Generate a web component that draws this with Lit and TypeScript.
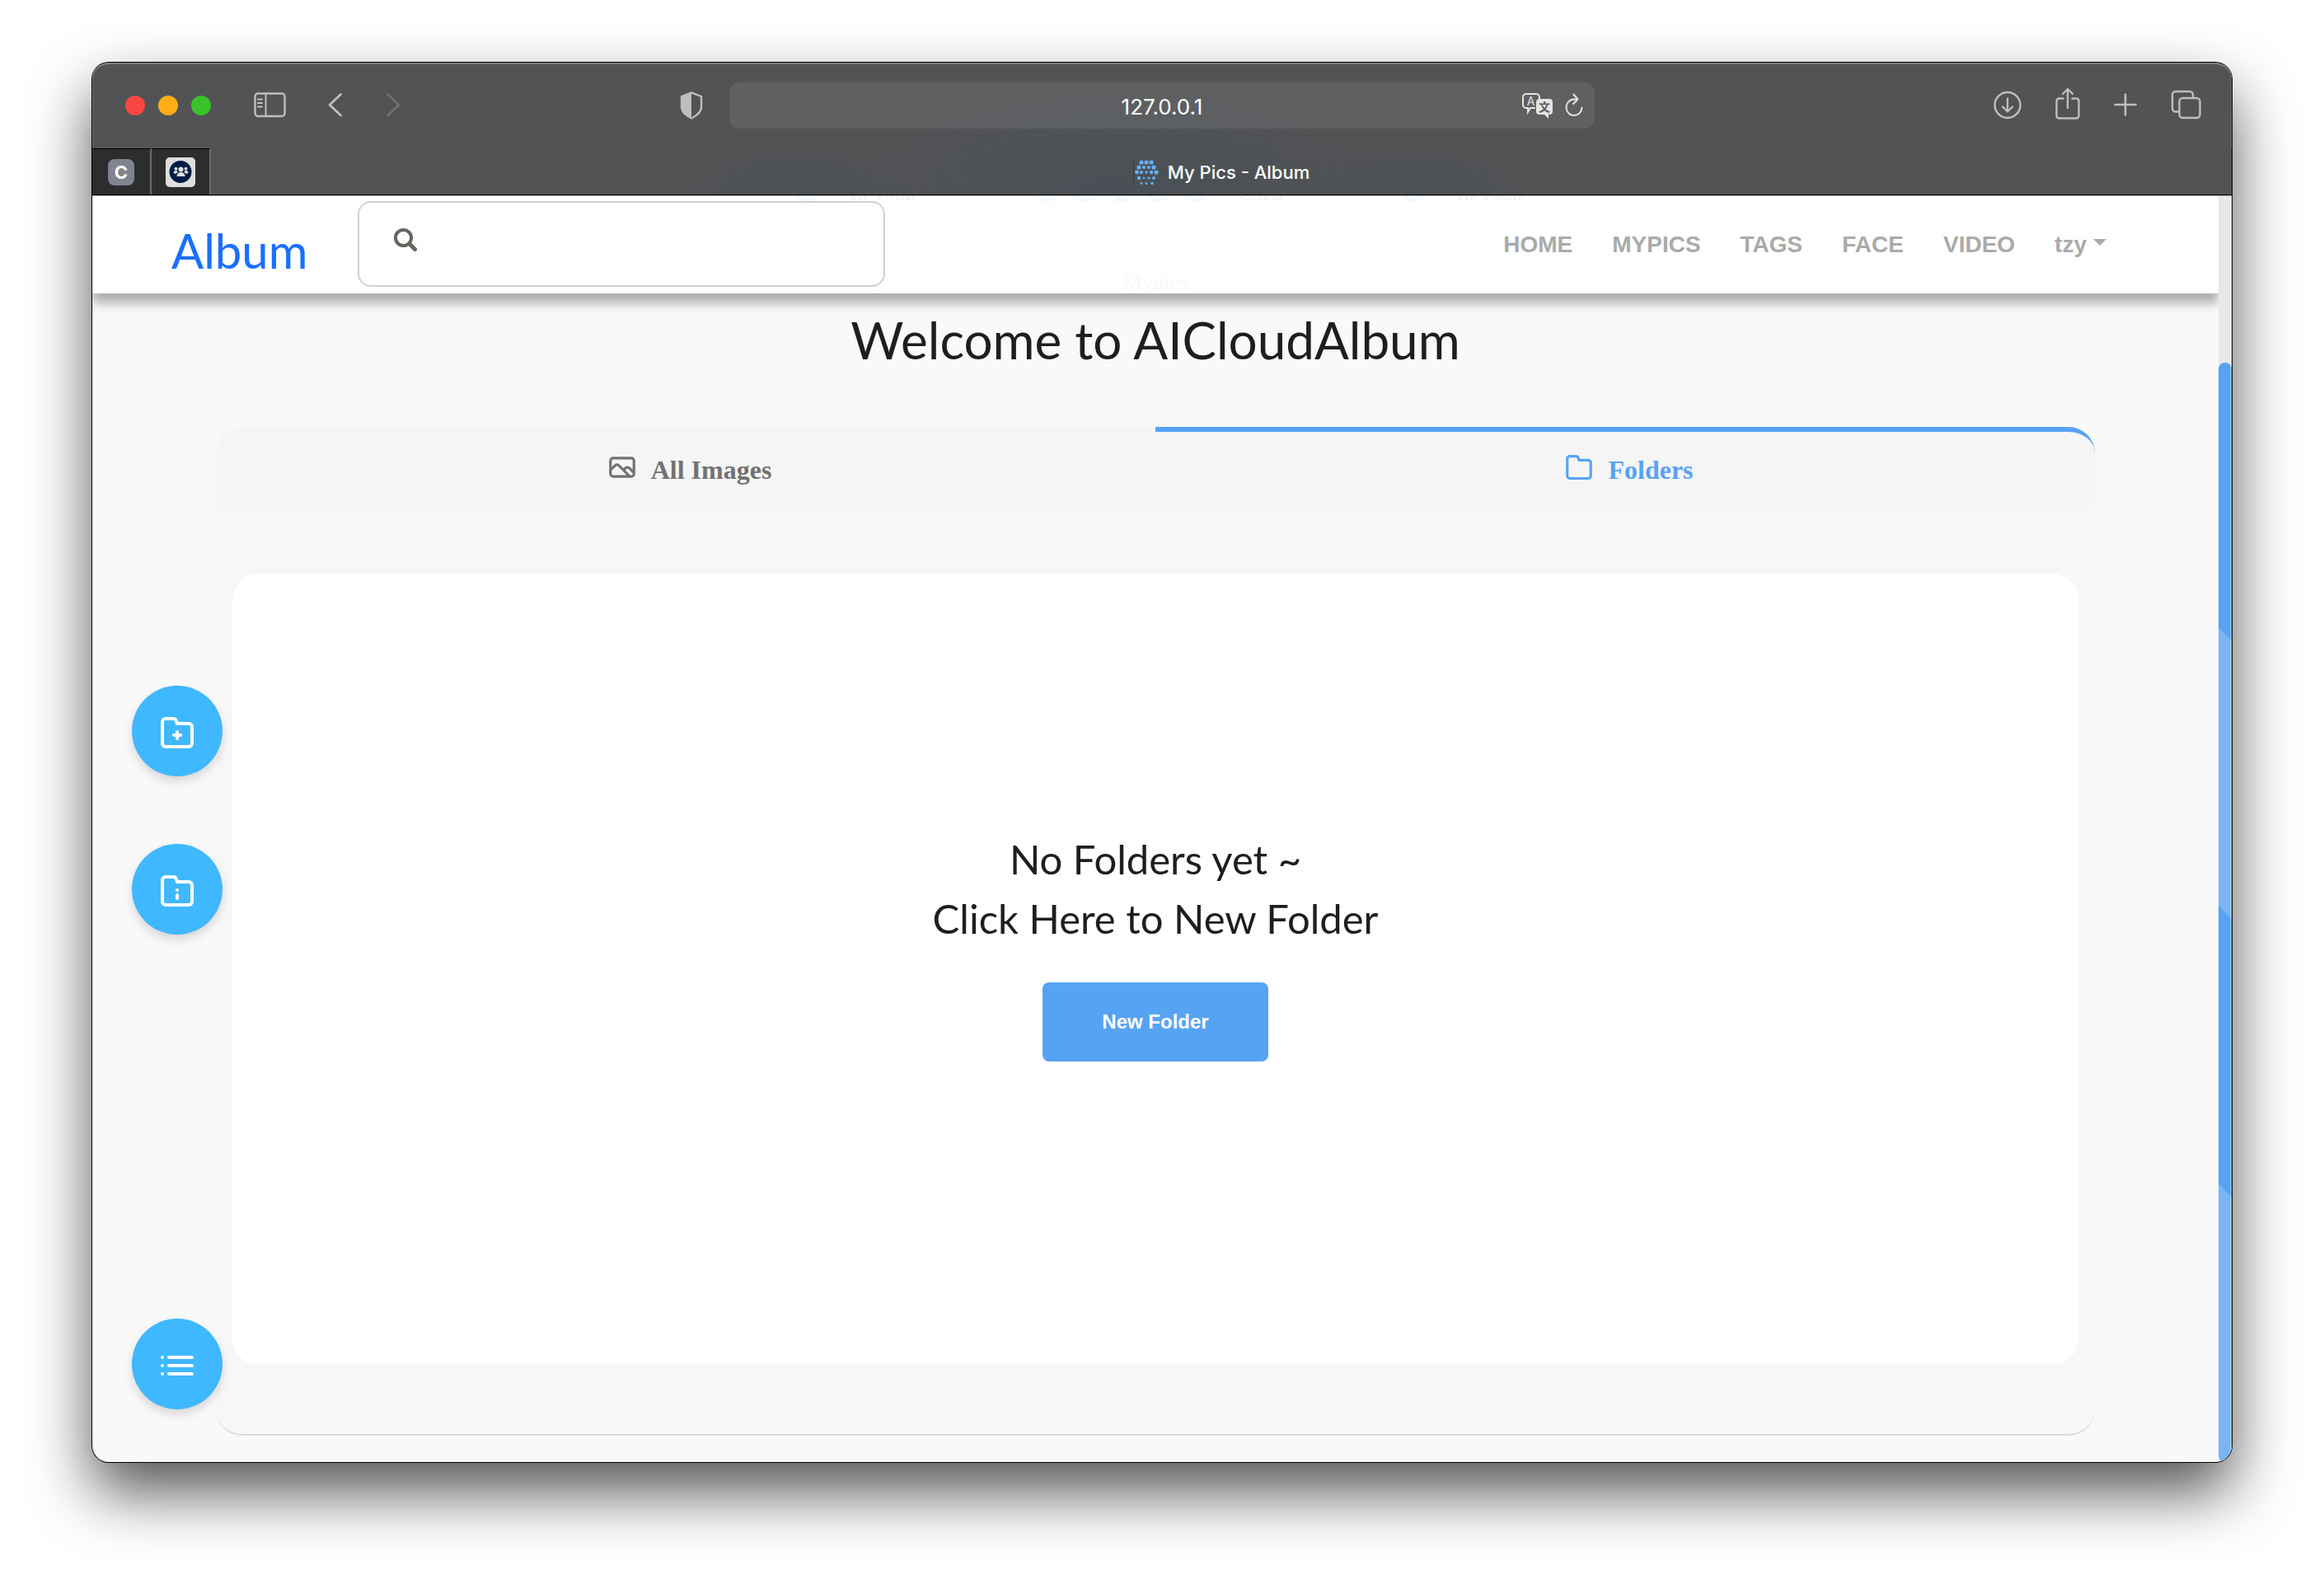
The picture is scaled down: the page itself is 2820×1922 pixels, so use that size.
import { LitElement, html, svg, css } from "lit";
import { customElement, property, state } from "lit/decorators.js";

const folderOutline = svg`<path d="M5 3.5h4.56a2 2 0 0 1 1.9 1.37L12 6.500h7a2 2 0 0 1 2 2v10a2 2 0 0 1-2 2H5a2 2 0 0 1-2-2v-13a2 2 0 0 1 2-2z"/>`;

const icons = {
  folder: html`<svg viewBox="0 0 24 24" aria-hidden="true" fill="none" stroke="currentColor" stroke-width="2">${folderOutline}</svg>`,
  folderPlus: html`<svg viewBox="0 0 24 24" aria-hidden="true" fill="none" stroke="currentColor" stroke-width="2" stroke-linecap="round">${folderOutline}<path d="M12 11.500v4M10 13.500h4"/></svg>`,
  folderInfo: html`<svg viewBox="0 0 24 24" aria-hidden="true" fill="none" stroke="currentColor" stroke-width="2" stroke-linecap="round">${folderOutline}<path d="M12 11.500h.01M12 14.500v2"/></svg>`,
  list: html`<svg viewBox="0 0 24 24" aria-hidden="true" fill="none" stroke="currentColor" stroke-width="2" stroke-linecap="round"><path d="M3 7h.01M3 12h.01M3 17h.01M7 7h14M7 12h14M7 17h14"/></svg>`,
  image: html`<svg viewBox="0 0 24 24" aria-hidden="true" fill="currentColor"><path d="M19,4H5A3,3,0,0,0,2,7V17a3,3,0,0,0,3,3H19a3,3,0,0,0,3-3V7A3,3,0,0,0,19,4ZM5,18a1,1,0,0,1-1-1V14.58l3.3-3.29a1,1,0,0,1,1.4,0L15.41,18Zm15-1a1,1,0,0,1-1,1h-.77l-3.81-3.83.88-.88a1,1,0,0,1,1.4,0L20,16.58Zm0-3.24-1.88-1.87a3.06,3.06,0,0,0-4.24,0l-.88.88L10.12,9.89a3.06,3.06,0,0,0-4.24,0L4,11.76V7A1,1,0,0,1,5,6H19a1,1,0,0,1,1,1Z"/></svg>`,
};

@customElement("browser-chrome")
class BrowserChrome extends LitElement {
  @property() address = "";
  @property() pageTitle = "";

  static styles = css`
    :host {
      display: block;
      color: #fff;
      font-family: Inter, "Liberation Sans", sans-serif;
      background:
        radial-gradient(ellipse 320px 130px at 48% 100%, #495056, transparent),
        radial-gradient(ellipse 160px 70px at 33% 100%, #4c5154, transparent),
        radial-gradient(ellipse 160px 70px at 62% 100%, #4c5154, transparent),
        #525355;
      border-bottom: 1px solid #000;
    }
    button {
      display: flex;
      padding: 0;
      border: 0;
      background: none;
      color: #bdbebf;
      font: inherit;
    }
    svg {
      display: block;
      flex: none;
    }
    .toolbar {
      display: grid;
      grid-template-columns: 1fr minmax(300px, 1050px) 1fr;
      align-items: center;
      height: 104px;
      border-radius: 20px 20px 0 0;
      box-shadow: inset 0 2px #7d7f7e, inset 1px 0 #6c6e6d, inset -1px 0 #6c6e6d;
    }
    .left {
      display: flex;
      align-items: center;
      padding-left: 40px;
    }
    .lights {
      display: flex;
      gap: 16px;
      margin-right: 52px;
    }
    .light {
      width: 24px;
      height: 24px;
      border-radius: 50%;
      background: #fa4643;
    }
    .light.min {
      background: #fdad16;
    }
    .light.max {
      background: #39c22a;
    }
    .back {
      margin: 0 52px 0 50px;
    }
    .forward {
      color: #6f7072;
    }
    .shield {
      margin: 0 32px 0 auto;
    }
    .address {
      display: grid;
      grid-template-columns: 1fr auto 1fr;
      align-items: center;
      height: 56px;
      border-radius: 12px;
      background: rgba(255, 255, 255, 0.08);
      font-size: 26px;
    }
    .host {
      grid-column: 2;
      padding-top: 2px;
    }
    .tools {
      display: flex;
      justify-content: flex-end;
      align-items: center;
      gap: 14px;
      padding-right: 14px;
    }
    .tools button {
      color: #e4e4e4;
    }
    .right {
      display: flex;
      justify-content: flex-end;
      gap: 41px;
      padding-right: 36px;
    }
    .tabs {
      display: flex;
      height: 56px;
    }
    .pinned {
      box-sizing: border-box;
      width: 72px;
      align-items: center;
      justify-content: center;
      background: #2c2d2d;
      border-top: 1px solid #000;
      border-right: 2px solid #6a6b6b;
    }
    .letter {
      width: 32px;
      height: 32px;
      border-radius: 8px;
      background: #828391;
      color: #fff;
      font-size: 22px;
      font-weight: 700;
      line-height: 32px;
      text-align: center;
    }
    .current {
      flex: 1;
      display: flex;
      align-items: center;
      justify-content: center;
      gap: 11px;
      padding-top: 2px;
      font-size: 22px;
      font-weight: 500;
    }
    .current svg {
      border-left: 1px solid #3a3c3e;
    }
  `;

  private favicon() {
    const rows = [
      { y: 4, xs: [8, 14, 20], r: [2.6, 2.6, 2.6] },
      { y: 10, xs: [5, 11, 17, 23], r: [2.6, 2, 2, 2.6] },
      { y: 16, xs: [2.500, 8, 14, 20, 26], r: [2.4, 2, 1.7, 2.2, 2.6] },
      { y: 23, xs: [5, 11, 17, 23], r: [2.3, 1.3, 1.5, 2] },
      { y: 29.5, xs: [8, 14, 21], r: [1.4, 1.4, 1.8] },
    ];
    return html`<svg width="30" height="32" viewBox="0 0 30 32" fill="#62b2fb" aria-hidden="true">
      ${rows.map((row) => row.xs.map((x, i) => svg`<circle cx=${x + 1} cy=${row.y} r=${row.r[i]}></circle>`))}
    </svg>`;
  }

  render() {
    return html`
      <div class="toolbar">
        <div class="left">
          <div class="lights">
            <span class="light"></span><span class="light min"></span><span class="light max"></span>
          </div>
          <button aria-label="Sidebar">
            <svg width="40" height="32" viewBox="0 0 40 32" fill="none" stroke="currentColor" stroke-width="2.4">
              <rect x="1.500" y="1.500" width="36" height="27.500" rx="3.500" /><path d="M14.500 2v27M5 8.500h5M5 13h5M5 17.500h5" stroke-linecap="round" stroke-width="2" />
            </svg>
          </button>
          <button class="back" aria-label="Back">
            <svg width="18" height="32" viewBox="0 0 18 32" fill="none" stroke="currentColor" stroke-width="2.800" stroke-linecap="round" stroke-linejoin="round">
              <path d="M15.500 2.500 2 15.200 15.500 28" />
            </svg>
          </button>
          <button class="forward" aria-label="Forward">
            <svg width="18" height="32" viewBox="0 0 18 32" fill="none" stroke="currentColor" stroke-width="2.800" stroke-linecap="round" stroke-linejoin="round">
              <path d="M2.500 2.500 16 15.200 2.500 28" />
            </svg>
          </button>
          <button class="shield" aria-label="Privacy report">
            <svg width="28" height="36" viewBox="0 0 28 36">
              <path d="M14 2.400 26 7v13c0 6-5 10-12 13.500C7 30 2 26 2 20V7z" fill="none" stroke="currentColor" stroke-width="2.400" stroke-linejoin="round" />
              <path d="M14 2v32C7 30 2 26 2 20V7z" fill="currentColor" />
            </svg>
          </button>
        </div>
        <div class="address">
          <span class="host">${this.address}</span>
          <div class="tools">
            <button aria-label="Translate">
              <svg width="38" height="32" viewBox="0 0 38 32">
                <path d="M5 2h12a4 4 0 0 1 4 4v4M16 19l-6 0v0l-3 5v-5H5a4 4 0 0 1-4-4V6a4 4 0 0 1 4-4" fill="none" stroke="currentColor" stroke-width="2" />
                <path d="M21 8h12a4 4 0 0 1 4 4v11a4 4 0 0 1-4 4h-1v5l-5-5h-6a4 4 0 0 1-4-4V12a4 4 0 0 1 4-4z" fill="currentColor" />
                <text x="10.500" y="15.500" font-size="14" text-anchor="middle" fill="currentColor">A</text>
                <text x="27" y="23" font-size="14" font-weight="700" text-anchor="middle" fill="#5b5c5e" font-family="Noto Sans CJK SC, sans-serif">文</text>
              </svg>
            </button>
            <button aria-label="Reload">
              <svg width="22" height="32" viewBox="0 0 22 32" fill="none" stroke="currentColor" stroke-width="2" stroke-linecap="round" stroke-linejoin="round">
                <path d="M20.500 18.500a9.500 9.800 0 1 1-9.500-10h4M10.500 2.500l5 6-5.500 5.500" />
              </svg>
            </button>
          </div>
        </div>
        <div class="right">
          <button aria-label="Downloads">
            <svg width="34" height="44" viewBox="0 0 34 44" fill="none" stroke="currentColor" stroke-width="2.400" stroke-linecap="round" stroke-linejoin="round">
              <circle cx="17" cy="21.500" r="15.500" /><path d="M17 13.500v15.500M11 23.500l6 6 6-6" />
            </svg>
          </button>
          <button aria-label="Share">
            <svg width="30" height="44" viewBox="0 0 30 44" fill="none" stroke="currentColor" stroke-width="2.400" stroke-linecap="round" stroke-linejoin="round">
              <path d="M9.500 13.500H4.500a3 3 0 0 0-3 3v18a3 3 0 0 0 3 3h21a3 3 0 0 0 3-3v-18a3 3 0 0 0-3-3h-5M15 25V2.500M9 8l6-6 6 6" />
            </svg>
          </button>
          <button aria-label="New tab">
            <svg width="28" height="44" viewBox="0 0 28 44" stroke="currentColor" stroke-width="2.600" stroke-linecap="round">
              <path d="M14 8.500v25M1.500 21h25" />
            </svg>
          </button>
          <button aria-label="Tab overview">
            <svg width="38" height="44" viewBox="0 0 38 44" fill="none" stroke="currentColor" stroke-width="2.400">
              <rect x="10.500" y="13" width="25" height="24" rx="4" /><path d="M10.500 29.500H6a4 4 0 0 1-4-4V9a4 4 0 0 1 4-4h17a4 4 0 0 1 4 4v4" />
            </svg>
          </button>
        </div>
      </div>
      <div class="tabs">
        <button class="pinned" aria-label="Pinned tab C"><span class="letter">C</span></button>
        <button class="pinned" aria-label="Pinned tab group">
          <svg width="36" height="36" viewBox="0 0 36 36">
            <rect width="36" height="36" rx="5" fill="#dedede" />
            <circle cx="18" cy="17.500" r="13.500" fill="#001c43" />
            <g fill="#dedede">
              <circle cx="18.500" cy="14.500" r="3" /><path d="M13.500 23c0-3 2-5 5-5s5 2 5 5z" />
              <circle cx="12.500" cy="13.800" r="2" /><circle cx="24.500" cy="13.800" r="2" />
              <path d="M9.500 19c0-2 1-3 3-3l2.500 1-2.500 3zM27.500 19c0-2-1-3-3-3l-2.500 1 2.500 3z" />
            </g>
          </svg>
        </button>
        <div class="current">${this.favicon()}<span>${this.pageTitle}</span></div>
      </div>
    `;
  }
}

@customElement("album-nav")
class AlbumNav extends LitElement {
  @property({ attribute: false }) links: string[] = [];
  @property() user = "";

  static styles = css`
    :host {
      box-sizing: border-box;
      display: flex;
      align-items: center;
      height: 118px;
      padding: 0 136px 2px 96px;
      background: rgba(255, 255, 255, 0.95);
      box-shadow: 0 12px 12px rgba(0, 0, 0, 0.3);
      font-family: "Liberation Sans", Arial, sans-serif;
    }
    .brand {
      width: 226px;
      padding-top: 16px;
      color: #1a6fff;
      font-family: Lato, sans-serif;
      font-size: 58px;
      font-weight: 400;
      line-height: 72px;
      text-decoration: none;
    }
    .search {
      box-sizing: border-box;
      display: flex;
      align-items: center;
      gap: 16px;
      width: 640px;
      height: 104px;
      padding: 0 24px 10px 41px;
      border: 2px solid #d0d0d0;
      border-radius: 16px;
      background: #fff;
      color: #666560;
    }
    .search input {
      flex: 1;
      min-width: 0;
      border: 0;
      outline: 0;
      background: none;
      font: 28px "Liberation Sans", Arial, sans-serif;
    }
    nav {
      display: flex;
      gap: 48px;
      margin-left: auto;
      padding-top: 2px;
    }
    a,
    .user {
      color: #aaa;
      font: 700 28px/36px "Liberation Sans", Arial, sans-serif;
      text-decoration: none;
    }
    .user {
      display: flex;
      align-items: center;
      gap: 8px;
      padding: 0;
      border: 0;
      background: none;
    }
    .caret {
      margin-bottom: 6px;
      border: 8px solid transparent;
      border-top-color: #aaa;
      border-bottom: 0;
    }
  `;

  render() {
    return html`
      <a class="brand" href="#home">Album</a>
      <label class="search">
        <svg width="30" height="30" viewBox="0 0 30 30" fill="none" stroke="currentColor" stroke-linecap="round" aria-hidden="true">
          <circle cx="12.500" cy="12.500" r="9.600" stroke-width="4" /><path d="m20.500 20.500 6 6" stroke-width="5" />
        </svg>
        <input type="search" aria-label="Search pictures" />
      </label>
      <nav>
        ${this.links.map((link) => html`<a href="#${link.toLowerCase()}">${link}</a>`)}
        <button class="user" aria-haspopup="menu">${this.user}<span class="caret"></span></button>
      </nav>
    `;
  }
}

@customElement("app-root")
class AppRoot extends LitElement {
  @state() private active = "Folders";

  /* Each stat shows a row of badges: round ones and one small square divider. */
  private stats = [
    { marks: ["round"], label: "In Total" },
    { marks: ["round", "round", "square", "round", "round"], label: "Used" },
    { marks: ["round"], label: "In Total" },
  ];

  private tabs = [
    { name: "All Images", icon: icons.image },
    { name: "Folders", icon: icons.folder },
  ];

  static styles = css`
    :host {
      box-sizing: border-box;
      display: flex;
      min-height: 100vh;
      padding: 76px 112px 148px;
      background: #fff;
      color: #1b1f22;
    }
    .window {
      flex: 1;
      display: flex;
      flex-direction: column;
      overflow: hidden;
      border-radius: 20px;
      background: #f9f9f9;
      box-shadow: 0 0 0 1px #000, 0 36px 74px rgba(0, 0, 0, 0.68);
    }
    .viewport {
      flex: 1;
      display: flex;
      border-top: 1px solid #b0b0b0;
    }
    .page {
      position: relative;
      flex: 1;
      display: flex;
      flex-direction: column;
      overflow: hidden;
      padding: 0 150px 32px;
    }
    album-nav {
      position: absolute;
      z-index: 2;
      inset: 0 0 auto;
    }
    .stats {
      display: flex;
      justify-content: center;
      align-items: flex-end;
      gap: 136px;
      height: 12px;
      font: 26px/30px "Liberation Serif", serif;
    }
    .stat {
      display: flex;
      align-items: flex-end;
      gap: 30px;
    }
    .marks {
      display: flex;
      padding-bottom: 5px;
    }
    .mark {
      width: 37px;
      height: 24px;
      margin: 0 4px;
      border-radius: 0 0 18px 18px;
      background: #57a3f3;
    }
    .mark.square {
      width: 15px;
      margin: 0 15px;
      border-radius: 0;
    }
    .crumb {
      align-self: center;
      margin-top: 78px;
      color: #3182ce;
      font: 26px/30px "Liberation Serif", serif;
      text-decoration: none;
    }
    .title,
    .message {
      margin: 0;
      font-family: Lato, sans-serif;
      font-weight: 400;
      text-align: center;
    }
    .title {
      margin: 18px 0 70px;
      font-size: 62px;
      line-height: 72px;
    }
    .panel {
      flex: 1;
      display: flex;
      flex-direction: column;
      border-bottom: 2px solid #d5dbe0;
      border-radius: 32px;
      background: #f7f7f7;
    }
    .tabs {
      display: flex;
      border-bottom: 2px solid #f2f2f2;
      border-radius: 32px 32px 0 0;
      background: #f5f5f5;
    }
    .tab {
      flex: 1;
      display: flex;
      align-items: center;
      justify-content: center;
      gap: 16px;
      height: 92px;
      padding: 5px 0 0 8px;
      border: 0;
      border-top: 6px solid transparent;
      background: none;
      color: #727272;
      font: 700 32px/36px "Liberation Serif", "Times New Roman", serif;
    }
    .tab:first-child {
      border-top-left-radius: 32px;
    }
    .tab:last-child {
      border-top-right-radius: 32px;
    }
    .tab.active {
      border-top-color: #57a3f3;
      color: #57a3f3;
    }
    .tab svg {
      width: 38px;
      height: 38px;
      margin-bottom: 6px;
    }
    .card {
      flex: 1;
      display: flex;
      flex-direction: column;
      align-items: center;
      justify-content: center;
      margin: 84px 20px;
      padding-bottom: 58px;
      border-radius: 32px;
      background: #fff;
    }
    .message {
      font-size: 49px;
      line-height: 72px;
    }
    .primary {
      width: 274px;
      height: 96px;
      margin-top: 42px;
      border: 0;
      border-radius: 8px;
      background: #57a3f3;
      color: #fff;
      font: 700 24px "Liberation Sans", Arial, sans-serif;
    }
    .actions {
      position: absolute;
      z-index: 1;
      top: 594px;
      bottom: 64px;
      left: 48px;
      display: flex;
      flex-direction: column;
      gap: 82px;
    }
    .fab {
      display: flex;
      align-items: center;
      justify-content: center;
      width: 110px;
      height: 110px;
      padding: 4px 0 0;
      border: 0;
      border-radius: 50%;
      background: #40b8ff;
      box-shadow: 0 6px 12px rgba(0, 0, 0, 0.14);
      color: #fff;
    }
    .fab:last-child {
      margin-top: auto;
    }
    .fab svg {
      width: 48px;
      height: 48px;
    }
    .scrollbar {
      display: flex;
      flex-direction: column;
      width: 16px;
      background: #e8e8e8;
    }
    .thumb {
      flex: 1;
      margin-top: 202px;
      border-radius: 8px;
      background:
        linear-gradient(to left, rgba(255, 255, 255, 0.2) 2px, transparent 2px),
        linear-gradient(45deg, rgba(255, 255, 255, 0.2) 25%, transparent 25% 50%, rgba(255, 255, 255, 0.2) 50% 75%, transparent 75%),
        #57a3f3;
    }
  `;

  render() {
    return html`
      <div class="window">
        <browser-chrome address="127.0.0.1" pageTitle="My Pics - Album"></browser-chrome>
        <div class="viewport">
          <main class="page">
            <album-nav .links=${["HOME", "MYPICS", "TAGS", "FACE", "VIDEO"]} user="tzy"></album-nav>
            <div class="stats">
              ${this.stats.map(
                (s) => html`<div class="stat">
                  <div class="marks">${s.marks.map((m) => html`<span class="mark ${m}"></span>`)}</div>
                  <span>${s.label}</span>
                </div>`
              )}
            </div>
            <a class="crumb" href="#mypics">Mypics</a>
            <h1 class="title">Welcome to AICloudAlbum</h1>
            <section class="panel">
              <div class="tabs" role="tablist">
                ${this.tabs.map(
                  (tab) => html`<button
                    class="tab ${tab.name === this.active ? "active" : ""}"
                    role="tab"
                    aria-selected=${tab.name === this.active}
                    @click=${() => (this.active = tab.name)}
                  >${tab.icon}<span>${tab.name}</span></button>`
                )}
              </div>
              <div class="card">
                <p class="message">No Folders yet ~</p>
                <p class="message">Click Here to New Folder</p>
                <button class="primary">New Folder</button>
              </div>
            </section>
            <div class="actions">
              <button class="fab" aria-label="Add folder">${icons.folderPlus}</button>
              <button class="fab" aria-label="Folder information">${icons.folderInfo}</button>
              <button class="fab" aria-label="Menu">${icons.list}</button>
            </div>
          </main>
          <div class="scrollbar"><div class="thumb"></div></div>
        </div>
      </div>
    `;
  }
}
